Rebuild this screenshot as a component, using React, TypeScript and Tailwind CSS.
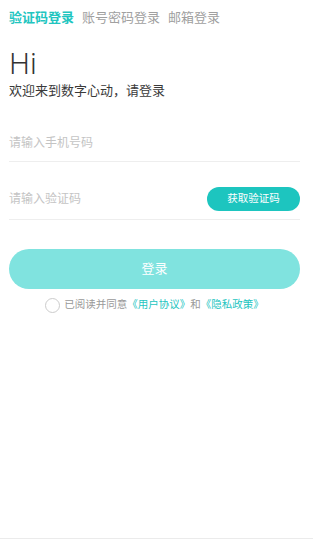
import React from "react";

export default function App() {
  return (
    <div
      className="w-full h-[539px] bg-white border-b border-[#ebebeb] pl-[9px] pr-[13px]"
      style={{ fontFamily: '"Noto Sans", "Noto Sans CJK SC", sans-serif' }}
    >
      <div className="flex gap-[8px] pt-[8px] text-[13px] leading-[18px]">
        <span className="text-[#22c5bf] font-semibold">验证码登录</span>
        <span className="text-[#a0a0a0]">账号密码登录</span>
        <span className="text-[#a0a0a0]">邮箱登录</span>
      </div>

      <div className="mt-[22px] text-[29px] leading-[29px] font-light text-[#333333]">Hi</div>
      <div className="mt-[4px] text-[13px] leading-[18px] text-[#3a3a3a]">欢迎来到数字心动，请登录</div>

      <div className="mt-[26px] h-[37px] border-b border-[#eeeeee] flex items-center text-[12px] text-[#c4c4c4]">
        请输入手机号码
      </div>

      <div className="mt-[17px] h-[41px] border-b border-[#eeeeee] flex items-center justify-between text-[12px] text-[#c4c4c4]">
        <span>请输入验证码</span>
        <button className="h-[24px] w-[93px] mb-[1px] rounded-full bg-[#1dc5bf] text-white text-[10.5px] flex items-center justify-center">
          获取验证码
        </button>
      </div>

      <button className="mt-[29px] w-full h-[40px] rounded-full bg-[#80e3df] text-white text-[13px] flex items-center justify-center">
        登录
      </button>

      <div className="mt-[8px] h-[16px] flex items-center justify-center gap-[4px] text-[10.5px] text-[#999999]">
        <span className="w-[15px] h-[15px] rounded-full border border-[#cccccc] shrink-0" />
        <span>
          已阅读并同意<span className="text-[#22c5bf]">《用户协议》</span>和<span className="text-[#22c5bf]">《隐私政策》</span>
        </span>
      </div>
    </div>
  );
}
